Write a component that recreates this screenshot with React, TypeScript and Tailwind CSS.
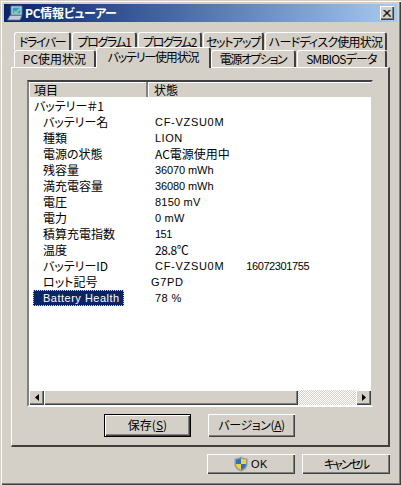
const raised = "bg-[#d4d0c8] shadow-[inset_1px_1px_0_#fff,inset_-1px_-1px_0_#404040,inset_-2px_-2px_0_#808080]";
const latin = "font-['Liberation_Sans','Noto_Sans_CJK_JP',sans-serif] text-[11px]";

const row1 = [
  { t: "ドライバー", w: "w-[57px]", s: "tracking-[-1.4px]" },
  { t: "プログラム1", w: "w-[65px]", s: "tracking-[-1.4px]" },
  { t: "プログラム2", w: "w-[64px]", s: "tracking-[-1.4px]" },
  { t: "セットアップ", w: "w-[61px]", s: "tracking-[-1.3px]" },
  { t: "ハードディスク使用状況", w: "w-[122px]", s: "tracking-[-0.8px]" },
];
const row2Left = { t: "PC使用状況", w: "w-[82px]", s: "" };
const row2Right = [
  { t: "電源オプション", w: "w-[85px]", s: "tracking-[-1.5px]" },
  { t: "SMBIOSデータ", w: "w-[90px]", s: "tracking-[-0.8px]" },
];

const rows: { k: string; v?: string; extra?: string; top?: boolean; sel?: boolean; vc?: string }[] = [
  { k: "バッテリー＃1", top: true },
  { k: "バッテリー名", v: "CF-VZSU0M", vc: `${latin} tracking-[0.7px]` },
  { k: "種類", v: "LION", vc: `${latin} tracking-[0.5px]` },
  { k: "電源の状態", v: "AC電源使用中" },
  { k: "残容量", v: "36070 mWh", vc: `${latin} tracking-[-0.1px]` },
  { k: "満充電容量", v: "36080 mWh", vc: `${latin} tracking-[-0.1px]` },
  { k: "電圧", v: "8150 mV", vc: `${latin} tracking-[0.2px]` },
  { k: "電力", v: "0 mW", vc: `${latin} tracking-[0.2px]` },
  { k: "積算充電指数", v: "151", vc: `${latin} tracking-[-0.5px]` },
  { k: "温度", v: "28.8℃", vc: "tracking-[-0.4px]" },
  { k: "バッテリーID", v: "CF-VZSU0M", extra: "16072301755", vc: `${latin} tracking-[0.7px]` },
  { k: "ロット記号", v: "G7PD", vc: `${latin} tracking-[0.7px] -ml-[4px]` },
  { k: "Battery Health", v: "78 %", sel: true, vc: `${latin} tracking-[0.4px]` },
];

function Tab({ t, w, s }: { t: string; w: string; s: string }) {
  return (
    <div className={`${w} shrink-0 h-full flex items-center justify-center rounded-t-[3px] border-t border-l border-white border-r-2 border-r-[#404040] bg-[#d4d0c8]`}>
      <span className={`whitespace-nowrap leading-[14px] ${s}`}>{t}</span>
    </div>
  );
}

function Shield() {
  return (
    <svg width="14" height="16" viewBox="0 0 14 16">
      <path d="M7 0.5 C9 2 11 2.5 13.5 2.5 V8 C13.5 12 10 14.5 7 15.5 C4 14.5 0.5 12 0.5 8 V2.5 C3 2.5 5 2 7 0.5 Z" fill="#8d9aa8" />
      <path d="M7 2 V8 H2 V3.6 C4 3.5 5.5 3 7 2 Z" fill="#2f6fc0" />
      <path d="M7 2 C8.5 3 10 3.5 12 3.6 V8 H7 Z" fill="#f3d23c" />
      <path d="M2 8 H7 V14 C4.5 13 2.2 11 2 8 Z" fill="#f3d23c" />
      <path d="M7 8 H12 C11.8 11 9.5 13 7 14 Z" fill="#2f6fc0" />
    </svg>
  );
}

function PcIcon() {
  return (
    <svg width="16" height="16" viewBox="0 0 16 16">
      <path d="M4 1 H15 V10 H4 Z" fill="#d8dce4" stroke="#5a6a80" strokeWidth="1" />
      <path d="M5.5 2.5 H13.5 V8.5 H5.5 Z" fill="#2f9fd8" />
      <path d="M7 6 L9 8 L13 3.5" fill="none" stroke="#8fe07a" strokeWidth="1.4" />
      <path d="M3 10.5 H15 L13 15 H0.5 Z" fill="#c4cad4" stroke="#6a7688" strokeWidth="0.8" />
    </svg>
  );
}

export default function App() {
  return (
    <div className="w-[401px] h-[485px] overflow-hidden bg-[#d4d0c8] p-[4px] flex flex-col text-[12px] leading-[16px] text-black font-['Noto_Sans_CJK_JP','Liberation_Sans',sans-serif] [font-feature-settings:'palt'] shadow-[inset_1px_1px_0_#d4d0c8,inset_2px_2px_0_#fff,inset_-1px_-1px_0_#404040,inset_-2px_-2px_0_#808080]">
      <div className="h-[18px] shrink-0 flex items-center pl-[3px] pr-[3px] bg-gradient-to-r from-[#0a246a] to-[#a6caf0] text-white font-bold">
        <PcIcon />
        <span className="ml-[2px] tracking-[-0.3px]">PC情報ビューアー</span>
        <div className={`ml-auto w-[14px] h-[14px] flex items-center justify-center ${raised}`}>
          <svg width="8" height="7" viewBox="0 0 8 7">
            <path d="M0.5 0 L7.5 7 M7.5 0 L0.5 7 M1.5 0 L8 6.5 M6.5 0 L0 6.5" stroke="#000" strokeWidth="1" fill="none" />
          </svg>
        </div>
      </div>

      <div className="flex-1 flex flex-col px-[7px] pt-[10px]">
        <div className="h-[18px] pl-[3px] pr-[3px] flex gap-[1px] shrink-0">
          {row1.map((x) => <Tab key={x.t} {...x} />)}
        </div>
        <div className="h-[17px] pl-[3px] pr-[3px] flex shrink-0">
          <Tab {...row2Left} />
          <div className="relative z-10 w-[115px] shrink-0 h-[21px] -mt-[3px] -mr-[1px] pb-[3px] flex items-center justify-center rounded-t-[3px] border-t border-l border-white border-r-2 border-r-[#404040] bg-[#d4d0c8]">
            <span className="whitespace-nowrap leading-[13px] tracking-[-1.2px]">バッテリー使用状況</span>
          </div>
          <div className="flex gap-[1px] ml-[1px]">
            {row2Right.map((x) => <Tab key={x.t} {...x} />)}
          </div>
        </div>

        <div className="h-[380px] shrink-0 flex flex-col pl-[15px] pr-[15px] pt-[12px] pb-[8px] border-t border-l border-white border-r-2 border-b-2 border-r-[#404040] border-b-[#404040]">
          <div className="h-[327px] shrink-0 flex flex-col border-2 border-t-[#404040] border-l-[#808080] border-r-[#d4d0c8] border-b-white bg-white">
            <div className="h-[15px] shrink-0 flex bg-[#d4d0c8] leading-[13px]">
              <div className="w-[119px] pl-[5px] flex items-center border-r-2 border-r-[#808080] shadow-[inset_1px_1px_0_#fff]">項目</div>
              <div className="flex-1 pl-[6px] flex items-center shadow-[inset_1px_1px_0_#fff]">状態</div>
            </div>
            <div className="flex-1 min-h-0 flex flex-col leading-[14px] pt-[1px]">
              {rows.map((r) => (
                <div key={r.k} className="h-[16px] shrink-0 flex items-center whitespace-nowrap">
                  <div className="w-[126px] shrink-0 flex items-center">
                    {r.sel ? (
                      <div className={`ml-[4px] w-[91px] h-[16px] pl-[9px] flex items-center bg-[#0a246a] text-white border border-dotted border-[#d4d0c8] tracking-[0.5px] ${latin}`}>{r.k}</div>
                    ) : (
                      <span className={r.top ? "ml-[5px]" : "ml-[14px]"}>{r.k}</span>
                    )}
                  </div>
                  {r.v && <span className={r.vc}>{r.v}</span>}
                  {r.extra && <span className={`ml-[22px] tracking-[-0.4px] ${latin}`}>{r.extra}</span>}
                </div>
              ))}
            </div>
            <div className="h-[16px] shrink-0 flex bg-[#d4d0c8] border-t border-t-white">
              <div className={`w-[15px] flex items-center justify-center ${raised}`}>
                <svg width="4" height="7" viewBox="0 0 4 7"><path d="M4 0 V7 L0 3.5 Z" fill="#000" /></svg>
              </div>
              <div className={`w-[254px] ${raised}`} />
              <div className="flex-1 bg-[repeating-conic-gradient(#d4d0c8_0_25%,#fff_0_50%)] bg-[length:2px_2px]" />
              <div className={`w-[15px] flex items-center justify-center ${raised}`}>
                <svg width="4" height="7" viewBox="0 0 4 7"><path d="M0 0 V7 L4 3.5 Z" fill="#000" /></svg>
              </div>
            </div>
          </div>
          <div className="mt-[7px] flex pl-[77px] gap-[17px]">
            <div className="w-[87px] h-[23px] border border-black">
              <div className={`w-full h-full pb-[2px] flex items-center justify-center ${raised}`}>保存(<u>S</u>)</div>
            </div>
            <div className={`w-[87px] h-[23px] pb-[2px] flex items-center justify-center tracking-[-0.4px] ${raised}`}>バージョン(<u>A</u>)</div>
          </div>
        </div>

        <div className="mt-[7px] flex justify-end gap-[7px]">
          <div className={`w-[88px] h-[20px] flex items-center justify-center gap-[3px] ${raised}`}>
            <Shield />
            <span className={`tracking-[0.6px] ${latin}`}>OK</span>
          </div>
          <div className={`w-[88px] h-[20px] flex items-center justify-center tracking-[-2px] ${raised}`}>キャンセル</div>
        </div>
      </div>
    </div>
  );
}
